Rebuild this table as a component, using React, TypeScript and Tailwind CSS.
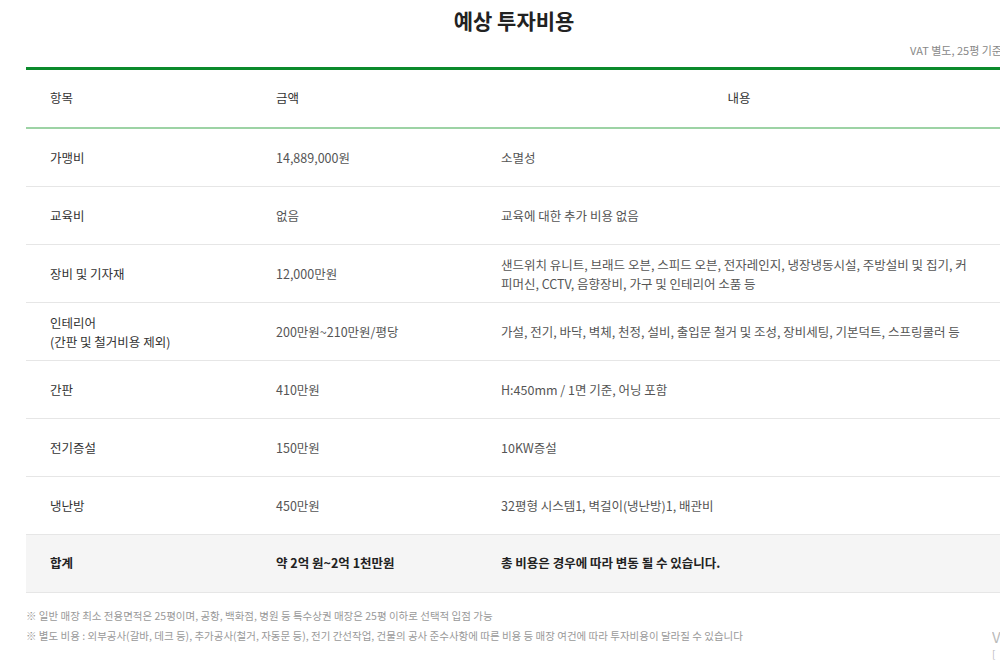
const rows = [
  { item: ["가맹비"], cost: "14,889,000원", desc: "소멸성" },
  { item: ["교육비"], cost: "없음", desc: "교육에 대한 추가 비용 없음" },
  {
    item: ["장비 및 기자재"],
    cost: "12,000만원",
    desc: "샌드위치 유니트, 브래드 오븐, 스피드 오븐, 전자레인지, 냉장냉동시설, 주방설비 및 집기, 커피머신, CCTV, 음향장비, 가구 및 인테리어 소품 등",
  },
  {
    item: ["인테리어", "(간판 및 철거비용 제외)"],
    cost: "200만원~210만원/평당",
    desc: "가설, 전기, 바닥, 벽체, 천정, 설비, 출입문 철거 및 조성, 장비세팅, 기본덕트, 스프링쿨러 등",
  },
  { item: ["간판"], cost: "410만원", desc: "H:450mm / 1면 기준, 어닝 포함" },
  { item: ["전기증설"], cost: "150만원", desc: "10KW증설" },
  { item: ["냉난방"], cost: "450만원", desc: "32평형 시스템1, 벽걸이(냉난방)1, 배관비" },
];

export default function App() {
  return (
    <div className="w-[1000px] h-[662px] overflow-hidden bg-white font-['Noto_Sans_CJK_KR','Noto_Sans',sans-serif]">
      <div className="ml-[26px] w-[976px]">
        {/* Title */}
        <h2 className="pt-[5px] text-center text-[21px] font-bold leading-[30px] text-[#222]">
          예상 투자비용
        </h2>
        <p className="mt-[7px] text-right text-[11px] leading-[16px] text-[#888]">VAT 별도, 25평 기준</p>

        {/* Table */}
        <div className="mt-[9px] border-t-[3px] border-[#0b8a2b]">
          <div className="flex h-[59px] items-center border-b-2 border-[#9dd3a5] text-[12.5px] text-[#333]">
            <div className="w-[226px] pl-6">항목</div>
            <div className="w-[228px] pl-6">금액</div>
            <div className="flex-1 text-center pr-1">내용</div>
          </div>

          {rows.map((r, i) => (
            <div
              key={i}
              className="flex h-[58px] items-center border-b border-[#e6e6e6] text-[12.5px] leading-[19px]"
            >
              <div className="w-[226px] pl-6 text-[#333]">
                {r.item.map((t) => (
                  <div key={t}>{t}</div>
                ))}
              </div>
              <div className="w-[228px] pl-6 text-[#555]">{r.cost}</div>
              <div className="flex-1 pl-[21px] pr-7 text-[#555]">{r.desc}</div>
            </div>
          ))}

          <div className="flex h-[58px] items-center border-b border-[#e6e6e6] bg-[#f5f5f5] text-[12.5px] font-bold text-[#222]">
            <div className="w-[226px] pl-6">합계</div>
            <div className="w-[228px] pl-6">약 2억 원~2억 1천만원</div>
            <div className="flex-1 pl-[21px]">총 비용은 경우에 따라 변동 될 수 있습니다.</div>
          </div>
        </div>

        {/* Notes */}
        <div className="mt-[13px] flex justify-between">
          <div className="text-[10.5px] leading-[20px] text-[#999]">
            <p>※ 일반 매장 최소 전용면적은 25평이며, 공항, 백화점, 병원 등 특수상권 매장은 25평 이하로 선택적 입점 가능</p>
            <p>※ 별도 비용 : 외부공사(갈바, 데크 등), 추가공사(철거, 자동문 등), 전기 간선작업, 건물의 공사 준수사항에 따른 비용 등 매장 여건에 따라 투자비용이 달라질 수 있습니다</p>
          </div>
          <div className="mt-[22px] w-[10px] shrink-0 overflow-hidden text-[#bbb]">
            <div className="text-[15px] leading-[18px]">V</div>
            <div className="mt-[2px] text-[10px] leading-[12px]">[</div>
          </div>
        </div>
      </div>
    </div>
  );
}
